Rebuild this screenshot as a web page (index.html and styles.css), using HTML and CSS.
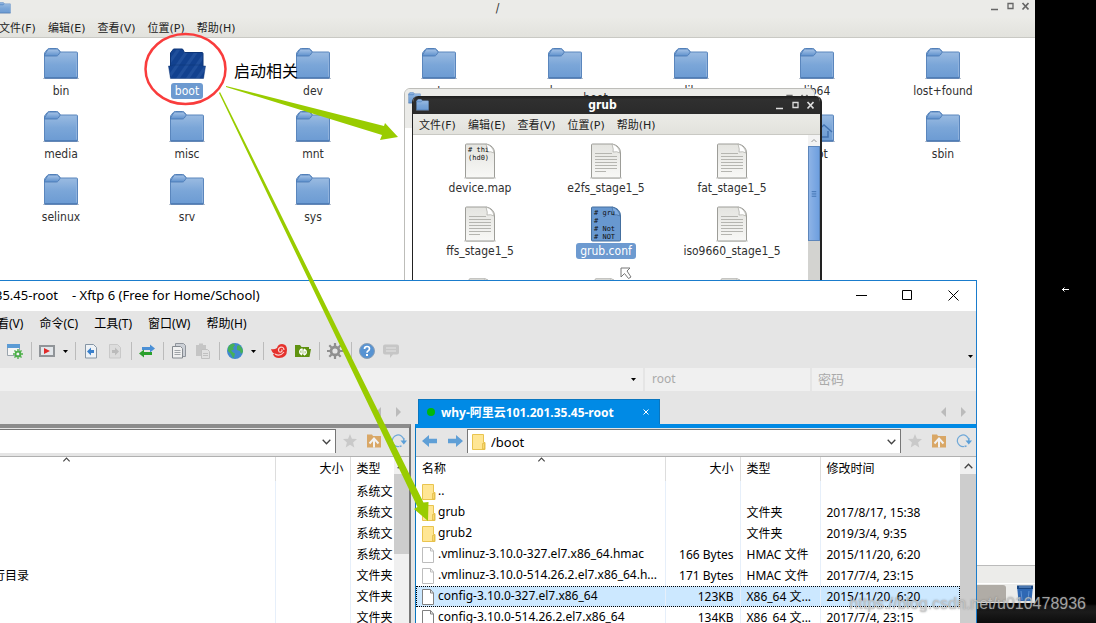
FILE: index.html
```html
<!DOCTYPE html>
<html lang="zh-CN">
<head>
<meta charset="utf-8">
<title>Xftp 6</title>
<link rel="stylesheet" href="styles.css">
</head>
<body>
<svg class="defs" aria-hidden="true">
  <defs>
    <linearGradient id="blue" x1="0" y1="0" x2="0" y2="1"><stop offset="0" stop-color="#a3c1e4"/><stop offset=".55" stop-color="#7ba6d8"/><stop offset="1" stop-color="#6c9bd3"/></linearGradient>
    <linearGradient id="tab" x1="0" y1="0" x2="0" y2="1"><stop offset="0" stop-color="#a8c5e8"/><stop offset="1" stop-color="#5e90cc"/></linearGradient>
    <linearGradient id="paper" x1="0" y1="0" x2="0" y2="1"><stop offset="0" stop-color="#e4e4e0"/><stop offset="1" stop-color="#f8f8f6"/></linearGradient>
    <pattern id="stripe" width="8" height="8" patternUnits="userSpaceOnUse" patternTransform="rotate(35)"><rect width="8" height="8" fill="#12418f"/><rect width="3" height="8" fill="#204f9b"/></pattern>
    <symbol id="folder" viewBox="0 0 36 32">
      <path d="M0 30.500h36" stroke="#bcc4cf"/>
      <path d="M1.500 6q0-1.500 1-2.500l2-2.200q.700-.800 2-.800h7q1.300 0 2 .900l1.800 2.600h16.200q1 0 1 1v24.500q0 .500-.500.500h-32q-.500 0-.500-.500z" fill="url(#blue)" stroke="#5a86bd"/>
      <path d="M1.500 7l3-5q.700-1 2-1h7q1.300 0 2 1l1.800 2-2 3q-.700 1-2 1h-11.800z" fill="url(#tab)" stroke="#4877b3" stroke-width=".800"/>
      <path d="M33.500 5.500v23" stroke="#8fb2dd"/>
      <path d="M1.500 30h33" stroke="#3e6ba6"/>
    </symbol>
    <symbol id="folder-open" viewBox="0 0 38 32">
      <path d="M2.500 29v-24l3-4h9l2 3.500h17.500q1 0 1 1v24z" fill="url(#stripe)" stroke="#0d3577"/>
      <path d="M.500 18h3l1-1h29l1 1h3l-2 12.500h-33z" fill="url(#stripe)" stroke="#0d3577" stroke-width=".500"/>
    </symbol>
    <symbol id="doc" viewBox="0 0 32 36">
      <path d="M0 35h32" stroke="#c9c9c6"/>
      <path d="M1.500 2q0-1 1-1h20q8 2 8 9v24q0 1-1 1h-27q-1 0-1-1z" fill="url(#paper)" stroke="#9d9d98"/>
      <path d="M22 1q2 6 1 8 4-1 7 1-1-7-8-9z" fill="#fff" stroke="#a9a9a4" stroke-width=".700"/>
    </symbol>
    <symbol id="doc-lines" viewBox="0 0 32 36">
      <use href="#doc"/>
      <path d="M5 10.500h17M5 13.500h22M5 16.500h22M5 19.500h22M5 22.500h22M5 25.500h22M5 28.500h11" stroke="#b5b5b0"/>
    </symbol>
    <symbol id="yfolder" viewBox="0 0 14 16"><path d="M.500.500h11v8h1.500v7h-12.500z" fill="#ffe694" stroke="#e9c44f"/><path d="M10.500 9.500h2v5.500h-2z" fill="#f9d96f" stroke="#e0b840" stroke-width=".700"/></symbol>
    <symbol id="page" viewBox="0 0 12 16"><path d="M.500.500h8l3 3.500v11.500h-11z" fill="#fff" stroke="currentColor"/><path d="M8.500.500v3.500h3" fill="none" stroke="currentColor"/></symbol>
    <symbol id="star" viewBox="0 0 14 14"><path d="M7 0l1.900 4.700 5.100.400-3.900 3.300 1.200 5-4.300-2.700-4.300 2.700 1.200-5-3.900-3.300 5.100-.400z" fill="#c9c9c9"/></symbol>
    <symbol id="up" viewBox="0 0 14 13"><path d="M0 0h5l1 1.500h8v11.500h-14z" fill="#d9a766"/><path d="M2.500 9l4.500-5 4.500 5M7 5v8" fill="none" stroke="#f2f2f2" stroke-width="2"/></symbol>
    <symbol id="reload" viewBox="0 0 16 14"><path d="M8 12.500a5.800 5.800 0 1 1 4.800-7" fill="none" stroke="#6fa8d8" stroke-width="1.200"/><path d="M8.500 12.500l2-.500M12.800 4v4" stroke="#6fa8d8" stroke-width="1.500"/><path d="M9.500 6.500h6.500l-3.200 4z" fill="#5b9fd8"/></symbol>
    <symbol id="gear" viewBox="0 0 16 16"><circle cx="8" cy="8" r="4" fill="none" stroke="currentColor" stroke-width="2.800"/><path d="M8 0v3M8 13v3M0 8h3M13 8h3M2.300 2.300l2.200 2.200M11.500 11.500l2.200 2.200M2.300 13.700l2.200-2.200M11.500 4.500l2.200-2.200" stroke="currentColor" stroke-width="2.200"/></symbol>
    <symbol id="caret" viewBox="0 0 5 3"><path d="M0 0h5l-2.500 3z" fill="#000"/></symbol>
    <symbol id="chev" viewBox="0 0 9 6"><path d="M.700.700l3.800 4 3.800-4" fill="none" stroke="#444" stroke-width="1.300"/></symbol>
    <symbol id="tri-l" viewBox="0 0 5 10"><path d="M5 0v10l-5-5z" fill="#bbb"/></symbol>
    <symbol id="tri-r" viewBox="0 0 5 10"><path d="M0 0v10l5-5z" fill="#bbb"/></symbol>
    <symbol id="arrow" viewBox="0 0 15 12"><path d="M0 6l7-6v3.700h8v4.600h-8v3.700z" fill="#5f9fd6"/></symbol>
    <symbol id="winbtns" viewBox="0 0 38 9"><path d="M0 7.500h7M31.500 1l6 6.500M37.500 1l-6 6.500" fill="none" stroke="currentColor" stroke-width="1.700"/><path d="M17 1.500h5v5h-5z" fill="none" stroke="currentColor" stroke-width="1.300"/></symbol>
  </defs>
</svg>

<main class="desktop">
  <section class="remote">
    <header class="gtk-title">
      <svg class="title-icon"><use href="#folder"/></svg>
      <span class="gtk-name">/</span>
      <svg class="gtk-btns"><use href="#winbtns"/></svg>
    </header>
    <nav class="gtk-menu">
      <button>文件(F)</button><button>编辑(E)</button><button>查看(V)</button><button>位置(P)</button><button>帮助(H)</button>
    </nav>
    <div class="icons root-icons">
      <div class="item"><svg class="folder"><use href="#folder"/></svg><span>bin</span></div>
      <div class="item chosen"><svg class="folder"><use href="#folder-open"/></svg><span>boot</span></div>
      <div class="item"><svg class="folder"><use href="#folder"/></svg><span>dev</span></div>
      <div class="item"><svg class="folder"><use href="#folder"/></svg><span>etc</span></div>
      <div class="item"><svg class="folder"><use href="#folder"/></svg><span>home</span></div>
      <div class="item"><svg class="folder"><use href="#folder"/></svg><span>lib</span></div>
      <div class="item"><svg class="folder"><use href="#folder"/></svg><span>lib64</span></div>
      <div class="item"><svg class="folder"><use href="#folder"/></svg><span>lost+found</span></div>
      <div class="item"><svg class="folder"><use href="#folder"/></svg><span>media</span></div>
      <div class="item"><svg class="folder"><use href="#folder"/></svg><span>misc</span></div>
      <div class="item"><svg class="folder"><use href="#folder"/></svg><span>mnt</span></div>
      <div class="item col-seven"><svg class="folder" viewBox="0 0 36 32"><use href="#folder"/><path d="M17 21l8-7 8 7M20 20v6h9v-6" fill="none" stroke="#4373b0" stroke-width="1.500"/></svg><span>root</span></div>
      <div class="item"><svg class="folder"><use href="#folder"/></svg><span>sbin</span></div>
      <div class="item"><svg class="folder"><use href="#folder"/></svg><span>selinux</span></div>
      <div class="item"><svg class="folder"><use href="#folder"/></svg><span>srv</span></div>
      <div class="item"><svg class="folder"><use href="#folder"/></svg><span>sys</span></div>
    </div>
    <div class="gtk-status"></div>
    <footer class="gnome-panel">
      <span class="task"></span>
      <svg class="trash" viewBox="0 0 16 17"><path d="M0 1h16l-1.500 15h-13z" fill="#2f68b4"/><path d="M0 .500h16v3.500h-16z" fill="#174684"/><path d="M2 2h12" stroke="#7ca6dc"/><path d="M4 6l1 9M12 6l-1 9" stroke="#5e93d6"/></svg>
    </footer>
  </section>

  <section class="boot-window">
    <header class="gtk-title"><svg class="title-icon"><use href="#folder"/></svg><span class="gtk-name">boot</span><svg class="gtk-btns"><use href="#winbtns"/></svg></header>
  </section>

  <section class="grub-window">
    <header class="gtk-title">
      <svg class="title-icon"><use href="#folder"/></svg>
      <span class="gtk-name">grub</span>
      <svg class="gtk-btns"><use href="#winbtns"/></svg>
    </header>
    <nav class="gtk-menu">
      <button>文件(F)</button><button>编辑(E)</button><button>查看(V)</button><button>位置(P)</button><button>帮助(H)</button>
    </nav>
    <div class="grub-body">
      <div class="icons grub-icons">
        <div class="item"><span class="preview"><svg class="doc"><use href="#doc"/></svg><code># thi
(hd0)</code></span><span>device.map</span></div>
        <div class="item"><svg class="doc"><use href="#doc-lines"/></svg><span>e2fs_stage1_5</span></div>
        <div class="item"><svg class="doc"><use href="#doc-lines"/></svg><span>fat_stage1_5</span></div>
        <div class="item"><svg class="doc"><use href="#doc-lines"/></svg><span>ffs_stage1_5</span></div>
        <div class="item chosen"><span class="preview"><svg class="doc" viewBox="0 0 32 36"><path d="M1.500 2q0-1 1-1h20q8 2 8 9v24q0 1-1 1h-27q-1 0-1-1z" fill="#6898d0" stroke="#446f9f"/><path d="M22 1q2 6 1 8 4-1 7 1-1-7-8-9z" fill="#7fabdf" stroke="#446f9f" stroke-width=".700"/></svg><code># gru
#
# Not
# NOT</code></span><span>grub.conf</span></div>
        <div class="item"><svg class="doc"><use href="#doc-lines"/></svg><span>iso9660_stage1_5</span></div>
        <div class="item small"><svg class="doc"><use href="#doc-lines"/></svg></div>
        <div class="item small"><svg class="doc"><use href="#doc-lines"/></svg></div>
        <div class="item small"><svg class="doc"><use href="#doc-lines"/></svg></div>
      </div>
      <div class="gtk-scroll">
        <svg class="gtk-up" viewBox="0 0 11 11"><path d="M3 7l2.500-2.500 2.500 2.500" fill="none" stroke="#999"/></svg>
        <svg class="gtk-thumb" viewBox="0 0 11 95"><path d="M3 45.500h5M3 48h5M3 50.500h5" stroke="#3d6fb0"/></svg>
      </div>
    </div>
  </section>
  <svg class="pointer" viewBox="0 0 12 14"><path d="M1 1h9l-3 3 4 6-2.500 1.500-4-5-3.500 3.500z" fill="#fff" stroke="#777"/></svg>

  <section class="xftp">
    <header class="x-title">
      <span>35.45-root</span><span class="x-app">- Xftp 6 (Free for Home/School)</span>
      <div class="x-btns">
        <button aria-label="最小化"><svg viewBox="0 0 11 11"><path d="M0 5.500h11" stroke="#000"/></svg></button>
        <button aria-label="最大化"><svg viewBox="0 0 11 11"><path d="M.500.500h9v9h-9z" fill="none" stroke="#000"/></svg></button>
        <button aria-label="关闭"><svg viewBox="0 0 11 11"><path d="M.500.500l10 10M10.500.500l-10 10" stroke="#000"/></svg></button>
      </div>
    </header>
    <nav class="x-menu"><button>看(V)</button><button>命令(C)</button><button>工具(T)</button><button>窗口(W)</button><button>帮助(H)</button></nav>
    <div class="x-tools">
      <button aria-label="属性"><svg viewBox="0 0 16 16"><path d="M.500 2.500h12v10h-12z" fill="#f5f5f5" stroke="#9aa4ad"/><path d="M0 1h13v4h-13z" fill="#5b9bd5"/><g color="#4cb048"><use href="#gear" x="6" y="6" width="10" height="10"/></g></svg></button>
      <i></i>
      <button aria-label="打开"><svg viewBox="0 0 16 16"><path d="M1 3h14v10h-14z" fill="#e2e6ea" stroke="#909498" stroke-width="2"/><path d="M5 5l6 3-6 3z" fill="#e02a2a"/></svg></button>
      <button class="drop" aria-label="更多"><svg><use href="#caret"/></svg></button>
      <i></i>
      <button aria-label="后退"><svg viewBox="0 0 16 16"><path d="M2.500 1.500h8l3 3v10.500h-11z" fill="#eef2f6" stroke="#8595a4"/><path d="M4 8.500l4-4v2.500h3v3h-3v2.500z" fill="#3a80cc"/></svg></button>
      <button aria-label="前进"><svg viewBox="0 0 16 16"><path d="M2.500 1.500h8l3 3v10.500h-11z" fill="#dcdcdc" stroke="#c9c9c9"/><path d="M12 8.500l-4-4v2.500h-3v3h3v2.500z" fill="#bbb"/></svg></button>
      <i></i>
      <button aria-label="传输"><svg viewBox="0 0 16 16"><path d="M3 4h8v-2.500l5 4-5 4v-2.500h-8z" fill="#4a8fd6"/><path d="M13 9h-8v-2.500l-5 4 5 4v-2.500h8z" fill="#2ba02b"/></svg></button>
      <i></i>
      <button aria-label="复制"><svg viewBox="0 0 16 16"><path d="M4.500.500h8l2 2v11h-10z" fill="#ccd0d6" stroke="#90959c"/><path d="M1.500 3.500h8l2 2v9.500h-10z" fill="#f0f0f0" stroke="#858a90"/><path d="M3.500 7.500h6M3.500 9.500h6M3.500 11.500h6" stroke="#a0a4a8"/></svg></button>
      <button aria-label="粘贴"><svg viewBox="0 0 16 16"><path d="M1 2h10v11h-10zM4 .500h4v2h-4z" fill="#c5c5c5"/><path d="M6.500 6.500h6l2 2v7h-8z" fill="#e0e0e0" stroke="#c0c0c0"/><path d="M8 10.500h5M8 12.500h5" stroke="#c0c0c0"/></svg></button>
      <i></i>
      <button aria-label="语言"><svg viewBox="0 0 16 16"><circle cx="8" cy="8" r="8" fill="#4188cf"/><path d="M1 4.500q2-4 6-4l1 2-2 2 1 2-3 1 2 2 2 1-1 4-1 .500-2-4-3-3zM10 3l2-1q4 3 4 7l-2 2-1-3-3-1z" fill="#46b058"/></svg></button>
      <button class="drop" aria-label="更多语言"><svg><use href="#caret"/></svg></button>
      <i></i>
      <button aria-label="Xshell"><svg viewBox="0 0 16 16"><path d="M0 6q3 1 6-1 1-4 5-4 5 0 5 6 0 8-8 8-5 0-6-4h2q-3-1-4-5z" fill="#e5322d"/><path d="M13 7q0-3-3-3-3 1-2.500 3.500.500 2 2.500 1.500 2-1 .500-2.500M4 11q5 3 9-2" fill="none" stroke="#fbd4d0" stroke-width="1.100"/></svg></button>
      <button aria-label="Xftp"><svg viewBox="0 0 16 16"><path d="M0 2h5l1.500 2h7.500v2h2l-1.500 8h-14.500z" fill="#5f9210"/><path d="M7 5.500v5.500M7 6q-3 1-2 4l2 2M9 12v-5.500M9 12q3-1 2-4l-2-2" fill="none" stroke="#fff" stroke-width="1.500"/></svg></button>
      <i></i>
      <button aria-label="选项" class="gray"><svg><use href="#gear"/></svg></button>
      <i></i>
      <button aria-label="帮助"><svg viewBox="0 0 16 16"><circle cx="8" cy="8" r="7.500" fill="#5793d2" stroke="#8a9fb6"/><path d="M5.500 6q0-2.500 2.500-2.500t2.500 2.300q0 1.200-1.300 2-1.200.700-1.200 2" fill="none" stroke="#fff" stroke-width="1.700"/><path d="M7 11h2v2h-2z" fill="#fff"/></svg></button>
      <button aria-label="反馈"><svg viewBox="0 0 16 16"><path d="M2 1.500h12q2 0 2 2v6q0 2-2 2h-4l-3 3.500v-3.500h-5q-2 0-2-2v-6q0-2 2-2z" fill="#c6c6c6"/><path d="M3 5h10M3 8h10" stroke="#e4e4e4" stroke-width="1.200"/></svg></button>
      <button class="drop last" aria-label="工具栏选项"><svg><use href="#caret"/></svg></button>
    </div>
    <div class="x-quick">
      <div class="host"><svg class="caret"><use href="#caret"/></svg></div>
      <input class="user" aria-label="用户名" placeholder="root">
      <input class="pass" aria-label="密码" placeholder="密码">
    </div>
    <div class="panes">
      <section class="pane local">
        <div class="tabs"><svg class="tri"><use href="#tri-l"/></svg><svg class="tri"><use href="#tri-r"/></svg></div>
        <div class="pane-box">
          <div class="addr"><div class="path"><svg class="chev"><use href="#chev"/></svg></div><svg class="ic"><use href="#star"/></svg><svg class="ic"><use href="#up"/></svg><svg class="ic wide"><use href="#reload"/></svg></div>
          <div class="list">
            <table>
              <colgroup><col><col class="c-size"><col class="c-cut"></colgroup>
              <thead><tr><th><svg class="sort"><use href="#chev"/></svg></th><th class="num">大小</th><th>类型</th></tr></thead>
              <tbody>
                <tr><td></td><td></td><td>系统文</td></tr>
                <tr><td></td><td></td><td>系统文</td></tr>
                <tr><td></td><td></td><td>系统文</td></tr>
                <tr><td></td><td></td><td>系统文</td></tr>
                <tr><td>行目录</td><td></td><td>文件夹</td></tr>
                <tr><td></td><td></td><td>文件夹</td></tr>
                <tr><td></td><td></td><td>文件夹</td></tr>
              </tbody>
            </table>
            <div class="scroll"><svg class="chev"><use href="#chev"/></svg><span class="thumb short"></span></div>
          </div>
        </div>
      </section>
      <section class="pane server">
        <div class="tabs">
          <button class="tab"><span class="dot"></span><span>why-阿里云101.201.35.45-root</span><svg class="x" viewBox="0 0 6 6"><path d="M.500.500l5 5M5.500.500l-5 5" stroke="#fff"/></svg></button>
          <svg class="tri"><use href="#tri-l"/></svg><svg class="tri"><use href="#tri-r"/></svg>
        </div>
        <div class="pane-box">
          <div class="addr">
            <svg class="nav"><use href="#arrow"/></svg><svg class="nav fwd"><use href="#arrow"/></svg>
            <div class="path"><svg class="yf"><use href="#yfolder"/></svg><input aria-label="路径" value="/boot"><svg class="chev"><use href="#chev"/></svg></div>
            <svg class="ic"><use href="#star"/></svg><svg class="ic"><use href="#up"/></svg><svg class="ic wide"><use href="#reload"/></svg>
          </div>
          <div class="list">
            <table>
              <colgroup><col><col class="c-size"><col class="c-type"><col class="c-date"></colgroup>
              <thead><tr><th>名称<svg class="sort"><use href="#chev"/></svg></th><th class="num">大小</th><th>类型</th><th>修改时间</th></tr></thead>
              <tbody>
                <tr><td><svg class="yf"><use href="#yfolder"/></svg>..</td><td></td><td></td><td></td></tr>
                <tr><td><svg class="yf"><use href="#yfolder"/></svg>grub</td><td></td><td>文件夹</td><td>2017/8/17, 15:38</td></tr>
                <tr><td><svg class="yf"><use href="#yfolder"/></svg>grub2</td><td></td><td>文件夹</td><td>2019/3/4, 9:35</td></tr>
                <tr><td><svg class="pg faint"><use href="#page"/></svg>.vmlinuz-3.10.0-327.el7.x86_64.hmac</td><td class="num">166 Bytes</td><td>HMAC 文件</td><td>2015/11/20, 6:20</td></tr>
                <tr><td><svg class="pg faint"><use href="#page"/></svg>.vmlinuz-3.10.0-514.26.2.el7.x86_64.h...</td><td class="num">171 Bytes</td><td>HMAC 文件</td><td>2017/7/4, 23:15</td></tr>
                <tr class="sel"><td><svg class="pg"><use href="#page"/></svg>config-3.10.0-327.el7.x86_64</td><td class="num">123KB</td><td>X86_64 文...</td><td>2015/11/20, 6:20</td></tr>
                <tr><td><svg class="pg"><use href="#page"/></svg>config-3.10.0-514.26.2.el7.x86_64</td><td class="num">134KB</td><td>X86_64 文...</td><td>2017/7/4, 23:15</td></tr>
              </tbody>
            </table>
            <div class="scroll"><svg class="chev"><use href="#chev"/></svg><span class="thumb"></span></div>
          </div>
        </div>
      </section>
    </div>
  </section>

  <svg class="marks" viewBox="0 0 450 540">
    <ellipse cx="185.500" cy="69" rx="40" ry="35" fill="none" stroke="#f93c3c" stroke-width="2.500"/>
    <path d="M226 86l158 40 1-3 13 14-18 3 2-5-156-48z" fill="#99cc00"/>
    <path d="M219 93l1-1 203.500 410.500 5-.500-.500 19-14-12 3.500-2z" fill="#99cc00"/>
  </svg>
  <span class="note">启动相关</span>
  <svg class="text-cursor" viewBox="0 0 7 5"><path d="M0 2.500h7M2.500.500l-2 2 2 2" fill="none" stroke="#fff"/></svg>
  <span class="watermark">https://blog.csdn.net/u010478936</span>
</main>
</body>
</html>
```

FILE: styles.css
```css
* { box-sizing: border-box; }
body { margin: 0; background: #000; }
button { border: 0; padding: 0; background: none; font: inherit; color: inherit; }
input { border: 0; padding: 0; font: inherit; background: none; outline: 0; min-width: 0; }
svg { display: block; flex: none; }
.defs { position: absolute; width: 0; height: 0; }

.desktop {
  position: relative;
  height: 100vh;
  overflow: hidden;
  background: linear-gradient(#000 0 604px, #141414 606px, #1b1b1b 612px, #0c0c0c);
  font-family: "Noto Sans", "Noto Sans CJK SC", sans-serif;
  font-size: 12px;
}

/* GNOME windows */
.remote, .boot-window, .grub-window {
  position: absolute;
  display: flex;
  flex-direction: column;
  font-family: "DejaVu Sans Condensed", "DejaVu Sans", "Noto Sans CJK SC", sans-serif;
  color: #303030;
}
.remote { top: 0; left: -10px; right: 61px; bottom: 20px; background: #fff; }
.gtk-title { display: flex; align-items: center; height: 18px; padding: 0 6px 0 9px; background: #ebebe8; }
.title-icon { width: 13px; height: 12px; }
.gtk-name { flex: 1; text-align: center; }
.gtk-btns { width: 38px; height: 9px; color: #666; }
.remote > .gtk-title { padding: 2px 6px 0 8px; align-items: flex-start; }
.remote > .gtk-title .gtk-name { padding-right: 7px; line-height: 13px; }
.gtk-menu {
  display: flex;
  gap: 12px;
  align-items: center;
  height: 20px;
  padding-left: 9px;
  padding-bottom: 1px;
  border-bottom: 1px solid #c9c9c4;
  background: linear-gradient(#ebebe7, #e2e2dd);
  font-size: 11px;
  font-family: "DejaVu Sans", "Noto Sans CJK SC", sans-serif;
  color: #222;
  white-space: nowrap;
}
.icons { display: grid; grid-auto-rows: 63px; grid-template-columns: repeat(8, 126px); flex: 1; align-content: start; }
.root-icons { padding: 10px 0 0 8px; }
.item { display: flex; flex-direction: column; align-items: center; line-height: 16px; }
.item > span:last-child { margin-top: 3px; padding: 0 4px; border-radius: 3px; }
.item.chosen > span:last-child { background: #6d9ad0; color: #fff; }
.folder { width: 36px; height: 32px; }
.chosen .folder { width: 38px; }
.col-seven { grid-column: 7; }
.gtk-status { height: 18px; background: #ececea; border-top: 1px solid #bbb; }
.gnome-panel { display: flex; justify-content: flex-end; align-items: center; gap: 11px; height: 20px; padding-right: 2px; background: #ededeb; border-top: 1px solid #fff; }
.task { width: 200px; height: 17px; border-radius: 3px; background: #b0aca6; }
.trash { width: 16px; height: 17px; }

.boot-window { top: 88px; left: 404px; width: 411px; height: 300px; border: 1px solid #bdbdb9; border-radius: 6px 6px 0 0; background: linear-gradient(#ebebe8 0 39px, #fff 39px); overflow: hidden; }
.boot-window .gtk-title { padding-left: 3px; }
.grub-window { top: 96px; left: 412px; width: 410px; height: 260px; border: 1px solid #222; border-width: 0 2px 0 1px; border-radius: 6px 6px 0 0; background: #fff; overflow: hidden; }
.grub-window .gtk-title { padding-left: 3px; background: linear-gradient(#1c1c1c, #303030 20%, #2a2a2a); color: #fff; font-weight: bold; }
.grub-window .gtk-btns { color: #ddd; }
.grub-window .gtk-menu { height: 21px; padding-left: 6px; }
.grub-body { display: flex; flex: 1; }
.grub-icons { grid-template-columns: repeat(3, 126px); padding: 8px 0 0 4px; }
.doc { width: 32px; height: 36px; }
.small { padding-top: 9px; }
.small .doc { width: 24px; height: 27px; }
.grub-icons .item > span:last-child { margin-top: 1px; }
.preview { display: grid; }
.preview > * { grid-area: 1 / 1; }
.preview code { padding: 3px 0 0 4px; font: 7px/8px "DejaVu Sans Mono", monospace; white-space: pre; color: #111; }
.gtk-scroll { width: 12px; background: #d3d3d0; }
.gtk-up { width: 12px; height: 11px; background: #f3f3f3; }
.gtk-thumb { width: 12px; height: 95px; background: linear-gradient(90deg, #8db3e6, #6e9fdf); border: 1px solid #5d86bb; }
.pointer { position: absolute; left: 620px; top: 267px; width: 12px; height: 14px; }

/* Xftp window */
.xftp {
  position: absolute;
  top: 280px;
  bottom: 0;
  left: -8px;
  right: 119px;
  display: flex;
  flex-direction: column;
  border: 1px solid #1a7ccc;
  border-bottom: 0;
  background: #e5e5e5;
  color: #000;
  overflow: hidden;
}
.x-title { display: flex; align-items: center; height: 30px; padding: 0 0 2px 2px; background: #fff; font-size: 13px; }
.x-app { margin-left: 14px; }
.x-btns { display: flex; margin-left: auto; }
.x-btns button { display: grid; place-items: center; width: 46px; height: 28px; }
.x-btns svg { width: 11px; height: 11px; }
.x-menu { display: flex; align-items: center; gap: 16px; height: 25px; padding: 0 0 2px 4px; }
.x-tools { display: flex; align-items: center; height: 32px; padding: 0 0 2px 10px; flex: none; }
.x-tools button { display: grid; place-items: center; width: 24px; height: 24px; }
.x-tools button svg { width: 16px; height: 16px; }
.x-tools .gray { color: #8f8f8f; }
.x-tools i { width: 8px; height: 18px; background: linear-gradient(#bbb, #bbb) center / 1px 100% no-repeat; }
.x-tools .drop { width: 12px; }
.x-tools .drop svg, .caret { width: 5px; height: 3px; }
.x-tools .last { margin-left: auto; padding-top: 10px; }
.x-quick { display: flex; gap: 2px; height: 23px; flex: none; font-size: 13px; }
.x-quick > * { background: #f0f0f0; }
.host { flex: 1; display: flex; align-items: center; justify-content: flex-end; padding-right: 7px; }
.x-quick input { width: 164px; padding: 0 0 2px 6px; }
.x-quick .user { width: 165px; padding-left: 7px; font-size: 12px; }
.x-quick input::placeholder { color: #aaa; opacity: 1; }

.panes { display: flex; gap: 4px; flex: 1; min-height: 0; }
.pane { display: flex; flex-direction: column; min-width: 0; }
.local { width: 418px; flex: none; }
.server { flex: 1; }
.tabs { display: flex; align-items: center; justify-content: flex-end; height: 33px; gap: 15px; padding: 8px 10px 0 3px; flex: none; }
.tri { width: 5px; height: 10px; }
.tab { display: flex; align-items: center; width: 242px; height: 25px; margin-right: auto; padding: 0 10px 0 8px; background: #008ae5; border: 1px solid #0a76bf; border-bottom: 0; color: #fff; font-weight: bold; }
.dot { width: 8px; height: 8px; margin-right: 6px; border-radius: 50%; background: #00b80c; }
.tab .x { width: 6px; height: 6px; margin-left: auto; }
.pane-box { display: flex; flex-direction: column; flex: 1; border-top: 4px solid #8c8c8c; border-right: 2px solid #777; }
.server .pane-box { border-color: #008ae5; border-left: 1px solid #0a76bf; border-right: 0; }
.addr { display: flex; align-items: center; height: 29px; padding: 0 4px 3px 6px; border-bottom: 1px solid #b0b0b0; }
.local .addr { padding: 0 2px 3px 0; }
.path { display: flex; flex: 1; align-items: center; height: 24px; padding: 1px 4px 0; background: #fff; border: solid #777; border-width: 1px 1px 0; margin-right: 7px; }
.path input { flex: 1; font-size: 13px; padding-left: 5px; }
.chev { width: 9px; height: 6px; }
.local .path .chev { margin-left: auto; }
.ic { width: 14px; height: 14px; margin-right: 10px; }
.ic.wide { width: 16px; margin-right: 0; }
.nav { width: 15px; height: 12px; margin-right: 11px; }
.nav.fwd { transform: scaleX(-1); margin-right: 4px; }
.yf { width: 14px; height: 16px; }
.pg { width: 12px; height: 16px; color: #808080; }
.pg.faint { color: #bdbdbd; }

.list { display: flex; flex: 1; background: #fff; }
table { flex: 1; width: 0; table-layout: fixed; border-collapse: collapse; align-self: flex-start; }
.c-size { width: 75px; }
.c-type { width: 80px; }
.c-date { width: 140px; }
.c-cut { width: 44px; }
th, td { height: 21px; padding: 0 0 0 6px; font-weight: normal; text-align: left; line-height: 16px; white-space: nowrap; overflow: hidden; border-right: 1px solid #e6effa; }
th { height: 24px; border-color: #ddd; }
th:last-child, td:last-child { border-right: 0; }
.local td:first-child { padding-left: 0; }
.num { text-align: right; padding-right: 6px; }
td svg { display: inline-block; vertical-align: middle; margin-right: 2px; }
td .pg { margin-right: 4px; }
.sort { position: absolute; top: 176px; width: 9px; height: 5px; transform: scaleY(-1); }
.local .sort { left: 69px; }
.server .sort { left: 544px; }
.sel { background: #cce8ff; outline: 1px dotted #000; outline-offset: -1px; }
.scroll { width: 16px; background: #f0f0f0; }
.local .scroll { width: 15px; }
.scroll .chev { margin: 6px auto 5px; transform: scaleY(-1); }
.thumb { display: block; height: 100%; background: #cdcdcd; }
.thumb.short { height: 80px; }

/* Annotations */
.marks { position: absolute; left: 0; top: 0; width: 450px; height: 540px; pointer-events: none; }
.note { position: absolute; left: 234px; top: 59px; font-size: 16px; line-height: 24px; color: #000; }
.text-cursor { position: absolute; left: 1062px; top: 287px; width: 7px; height: 5px; }
.watermark { position: absolute; right: 10px; bottom: 8px; font: 16px/22px "Liberation Sans", sans-serif; color: rgba(205, 205, 205, .75); text-shadow: 0 0 2px rgba(90, 90, 90, .6); }
```
